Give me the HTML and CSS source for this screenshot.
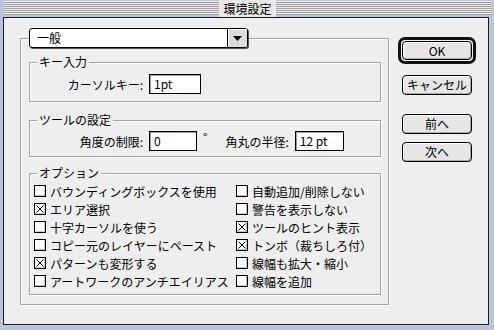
FILE: index.html
```html
<!DOCTYPE html>
<html lang="ja">
<head>
  <meta charset="UTF-8">
  <title>環境設定</title>
  <link rel="stylesheet" href="styles.css">
</head>
<body>
  <div class="window">
    <div class="titlebar"><span class="title">環境設定</span></div>
    <div class="dialog">
      <div class="main">
        <fieldset class="panel">
          <legend class="popup">
            <span class="popup-text">一般</span>
            <span class="popup-arrow">
              <svg width="9" height="5" viewBox="0 0 9 5"><polygon points="0,0 9,0 4.5,5" fill="#000"/></svg>
            </span>
          </legend>

          <fieldset class="group group-keys">
            <legend>キー入力</legend>
            <div class="field-row">
              <span class="field-label">カーソルキー:</span>
              <span class="textbox tb-cursor">1pt</span>
            </div>
          </fieldset>

          <fieldset class="group group-tools">
            <legend>ツールの設定</legend>
            <div class="field-row">
              <span class="field-label">角度の制限:</span>
              <span class="textbox tb-angle">0</span>
              <span class="degree">°</span>
              <span class="field-label-2">角丸の半径:</span>
              <span class="textbox tb-radius">12 pt</span>
            </div>
          </fieldset>

          <fieldset class="group group-options">
            <legend>オプション</legend>
            <div class="options">
              <div class="check"><span class="box"></span>バウンディングボックスを使用</div>
              <div class="check"><span class="box"></span>自動追加/削除しない</div>
              <div class="check"><span class="box checked"><svg width="10" height="10" viewBox="0 0 10 10"><path d="M1.5 1.5 L8.5 8.5 M8.5 1.5 L1.5 8.5" stroke="#000" stroke-width="1"/></svg></span>エリア選択</div>
              <div class="check"><span class="box"></span>警告を表示しない</div>
              <div class="check"><span class="box"></span>十字カーソルを使う</div>
              <div class="check"><span class="box checked"><svg width="10" height="10" viewBox="0 0 10 10"><path d="M1.5 1.5 L8.5 8.5 M8.5 1.5 L1.5 8.5" stroke="#000" stroke-width="1"/></svg></span>ツールのヒント表示</div>
              <div class="check"><span class="box"></span>コピー元のレイヤーにペースト</div>
              <div class="check"><span class="box checked"><svg width="10" height="10" viewBox="0 0 10 10"><path d="M1.5 1.5 L8.5 8.5 M8.5 1.5 L1.5 8.5" stroke="#000" stroke-width="1"/></svg></span>トンボ（裁ちしろ付）</div>
              <div class="check"><span class="box checked"><svg width="10" height="10" viewBox="0 0 10 10"><path d="M1.5 1.5 L8.5 8.5 M8.5 1.5 L1.5 8.5" stroke="#000" stroke-width="1"/></svg></span>パターンも変形する</div>
              <div class="check"><span class="box"></span>線幅も拡大・縮小</div>
              <div class="check"><span class="box"></span>アートワークのアンチエイリアス</div>
              <div class="check"><span class="box"></span>線幅を追加</div>
            </div>
          </fieldset>
        </fieldset>
      </div>

      <div class="side">
        <div class="default-ring"><button class="btn">OK</button></div>
        <button class="btn btn-cancel">キャンセル</button>
        <button class="btn btn-prev">前へ</button>
        <button class="btn btn-next">次へ</button>
      </div>
    </div>
  </div>
</body>
</html>
```

FILE: styles.css
```css
body {
  margin: 0;
  font-family: "Noto Sans CJK JP", "DejaVu Sans", sans-serif;
  font-size: 12px;
  color: #000;
  background: #bcc4dc;
}
.window {
  width: 494px;
  height: 330px;
  box-sizing: border-box;
  background: #bcc4dc;
  display: flex;
  flex-direction: column;
  overflow: hidden;
}
.titlebar {
  height: 17px;
  margin: 0 2px 0 3px;
  padding: 1px 0 2px;
  box-sizing: border-box;
  background: repeating-linear-gradient(to bottom, #a2a2a2 0 1px, #ececec 1px 2px);
  background-clip: content-box;
  display: flex;
  justify-content: center;
  align-items: stretch;
}
.title {
  background: #e8e8e8;
  padding: 0 4px;
  margin-top: -1px;
  margin-bottom: -2px;
  height: 17px;
  line-height: 17px;
}
.dialog {
  flex: 1;
  margin: 0 5px 5px 3px;
  border: 1px solid #1c1c1c;
  background: #eeeeee;
  display: flex;
}
.main {
  width: 385px;
  padding: 10px 0 0 16px;
  box-sizing: border-box;
}

/* group boxes */
fieldset {
  margin: 0;
  padding: 0;
  min-inline-size: 0;
  border: 1px solid #a4a4a4;
  box-shadow: inset 1px 1px 0 #fff, 1px 1px 0 #fff;
}
.group legend {
  margin-left: 7px;
  padding: 0 2px;
  line-height: 14px;
  background: #eeeeee;
}
.panel {
  width: 369px;
  box-sizing: border-box;
  padding: 0 7px 9px 8px;
}
.popup {
  display: flex;
  width: 219px;
  height: 20px;
  box-sizing: border-box;
  margin-left: 0;
  padding: 0;
  border: 1px solid #000;
  border-radius: 3px;
  background: #fff;
  box-shadow: 1px 1px 0 #555;
}
.popup-text {
  flex: 1;
  padding-left: 7px;
  line-height: 18px;
}
.popup-arrow {
  width: 19px;
  border-left: 1px solid #000;
  background: #dcdcdc;
  border-radius: 0 2px 2px 0;
  box-shadow: inset 1px 1px 0 #fff;
  display: flex;
  align-items: center;
  justify-content: center;
}
.group-keys {
  margin-top: 7px;
  padding: 5px 0 7px;
}
.group-tools {
  margin-top: 11px;
  padding: 4px 0 5px;
}
.group-options {
  margin-top: 9px;
  padding: 2px 0 4px;
}
.field-row {
  display: flex;
  align-items: center;
  height: 20px;
}
.field-label {
  width: 113px;
  text-align: right;
  margin-right: 6px;
}
.field-label-2 {
  margin-left: 18px;
  margin-right: 6px;
}
.degree {
  align-self: flex-start;
  margin-left: 6px;
  line-height: 12px;
}
.textbox {
  height: 20px;
  box-sizing: border-box;
  border: 1px solid #000;
  background: #fff;
  box-shadow: inset 1px 1px 0 #9a9a9a;
  padding-left: 4px;
  line-height: 18px;
}
.tb-cursor { width: 52px; }
.tb-angle { width: 48px; }
.tb-radius { width: 49px; }

/* checkboxes */
.options {
  display: grid;
  grid-template-columns: 202px auto;
  grid-auto-rows: 18px;
  padding-left: 4px;
}
.check {
  display: flex;
  align-items: center;
  gap: 4px;
  white-space: nowrap;
}
.box {
  width: 12px;
  height: 12px;
  box-sizing: border-box;
  border: 1px solid #000;
  background: #fff;
  box-shadow: inset -1px -1px 0 #c8c8c8;
  display: flex;
}

/* buttons */
.side {
  display: flex;
  flex-direction: column;
  align-items: flex-start;
  padding: 19px 0 0 9px;
}
.btn {
  width: 70px;
  height: 20px;
  margin: 0 0 0 4px;
  padding: 0;
  border: 1px solid #000;
  border-radius: 4px;
  background: #e6e6e6;
  box-shadow: inset 1px 1px 0 #fff, inset -1px -1px 0 #a8a8a8;
  font-family: inherit;
  font-size: 12px;
  color: #000;
  line-height: 18px;
}
.default-ring {
  border: 3px solid #111;
  border-radius: 7px;
  padding: 1px;
}
.default-ring .btn {
  margin: 0;
  height: 19px;
  display: block;
}
.btn-cancel { margin-top: 11px; }
.btn-prev { margin-top: 19px; }
.btn-next { margin-top: 8px; }
```
